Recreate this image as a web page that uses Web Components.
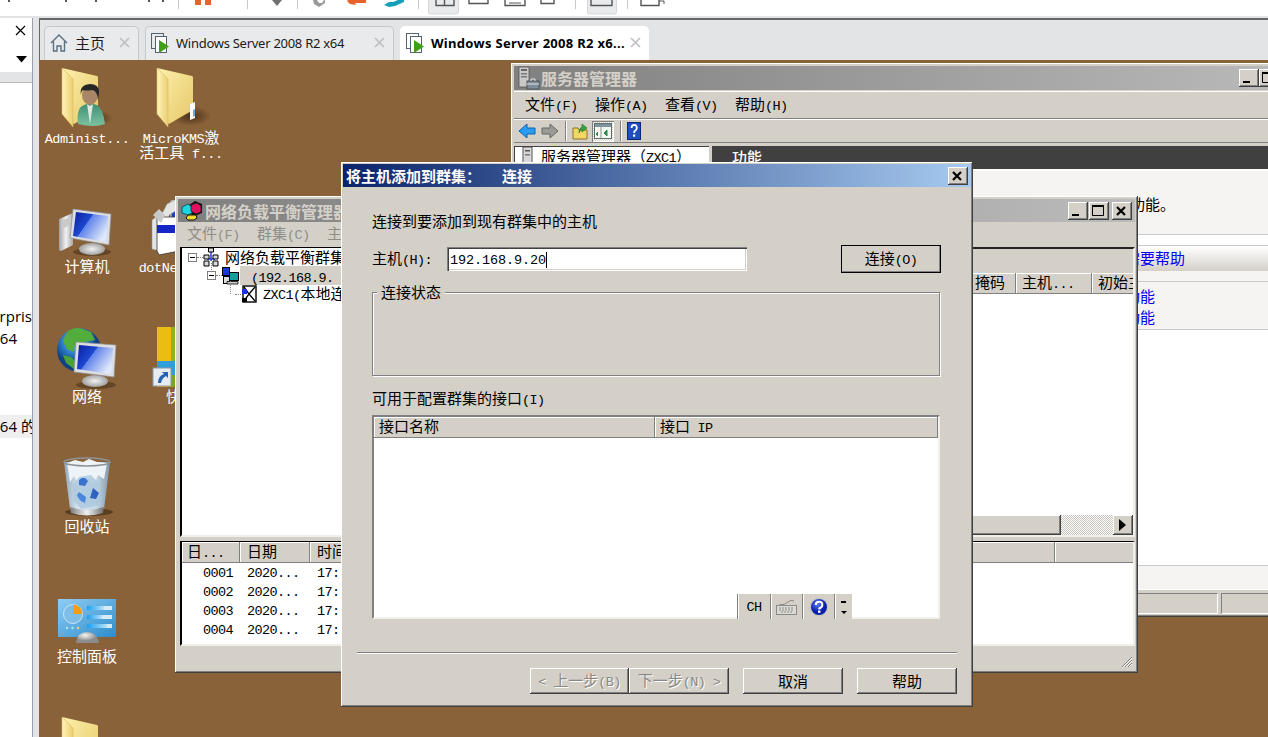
<!DOCTYPE html>
<html lang="zh">
<head>
<meta charset="utf-8">
<title>Windows Server 2008 R2 x64</title>
<style>
html,body{margin:0;padding:0;width:1268px;height:737px;overflow:hidden;background:#fff}
body{font:15px/16px "Noto Sans CJK SC","Liberation Sans",sans-serif;color:#000}
</style>
</head>
<body>
<x-app></x-app>
<script>
const BEVEL='box-shadow:inset -1px -1px #404040,inset 1px 1px #fff,inset -2px -2px #808080,inset 2px 2px #d4d0c8;';
const FOLD=`<linearGradient id="f" x1="0" y1="0" x2="1" y2="1"><stop offset="0" stop-color="#fdf0ac"/><stop offset="1" stop-color="#e6c868"/></linearGradient><linearGradient id="g" x1="0" y1="0" x2="1" y2="0"><stop offset="0" stop-color="#fff4b8"/><stop offset="1" stop-color="#eccf72"/></linearGradient><radialGradient id="s"><stop offset="0" stop-color="#3a2410" stop-opacity=".8"/><stop offset="1" stop-color="#3a2410" stop-opacity="0"/></radialGradient>`;
const SCR=`<linearGradient id="sc" x1="0" y1="0" x2="1" y2=".6"><stop offset="0" stop-color="#0a1ea0"/><stop offset=".45" stop-color="#1d49d0"/><stop offset=".46" stop-color="#5f83ea"/><stop offset="1" stop-color="#dfe7fb"/></linearGradient><radialGradient id="ba"><stop offset="0" stop-color="#f2f2f2"/><stop offset="1" stop-color="#a2a2a2"/></radialGradient>`;
const ART={
folder:`<defs>${FOLD}</defs><ellipse cx="40" cy="50" rx="20" ry="9" fill="url(#s)"/><path d="M7 2 42 10q1 0 1 2V44L19 58 7 46Z" fill="url(#f)"/><path d="M7 2 18 13V61L7 48Z" fill="url(#g)" stroke="#d9b95c" stroke-width=".6"/>`,
person:`<defs>${FOLD}<linearGradient id="b" x1="0" y1="0" x2="0" y2="1"><stop offset="0" stop-color="#3f8e74"/><stop offset="1" stop-color="#7cc2a0"/></linearGradient></defs><ellipse cx="40" cy="52" rx="18" ry="8" fill="url(#s)"/><path d="M7 2 42 10q1 0 1 2V44L19 58 7 46Z" fill="url(#f)"/><path d="M7 2 18 13V61L7 48Z" fill="url(#g)" stroke="#d9b95c" stroke-width=".6"/><path d="M23 58q-2-16 6-19l6-2 7 2q6 3 8 19-11 4-27 0Z" fill="url(#b)"/><path d="M32 38l3 20 3-20-3 2Z" fill="#dfe9e2"/><ellipse cx="35" cy="29" rx="8" ry="10" fill="#a98668"/><path d="M26 29q-2-10 9-11 9 0 9 8l-1 8q-1-10-6-10-6 1-9 0-2 1-2 5Z" fill="#262626"/>`,
paper:`<defs>${FOLD}</defs><ellipse cx="42" cy="50" rx="20" ry="10" fill="url(#s)"/><path d="M8 2 43 10q1 0 1 2V44L20 58 8 46Z" fill="url(#f)"/><path d="M8 2 19 13V61L8 48Z" fill="url(#g)" stroke="#d9b95c" stroke-width=".6"/><path d="M41 38l5-2v16l-5 2Z" fill="#fff"/><path d="M44 44l2-1v7l-2 1Z" fill="#6aa9e0"/>`,
computer:`<defs>${SCR}<linearGradient id="m" x1="0" y1="0" x2="1" y2="0"><stop offset="0" stop-color="#9ea2a6"/><stop offset=".5" stop-color="#f1f1f1"/><stop offset="1" stop-color="#a8a8a8"/></linearGradient></defs><path d="M4 24 18 18V50L6 56Q4 56 4 54Z" fill="url(#m)"/><path d="M6 26 16 22V30L6 34Z" fill="#c9c9c9"/><ellipse cx="37" cy="57" rx="19" ry="4" fill="#4d3317" opacity=".6"/><ellipse cx="37" cy="54" rx="13" ry="6" fill="url(#ba)"/><path d="M18 14 56 19 54 50 15 43Z" fill="#dcdde0" stroke="#8d9094" stroke-width=".7"/><path d="M21 17 53 21 51 47 18 41Z" fill="url(#sc)"/>`,
network:`<defs>${SCR}<radialGradient id="gl" cx=".4" cy=".3"><stop offset="0" stop-color="#7fc0ee"/><stop offset=".6" stop-color="#2a78c4"/><stop offset="1" stop-color="#103f82"/></radialGradient></defs><circle cx="24" cy="25" r="22" fill="url(#gl)"/><path d="M12 7q8-6 16-3l8 3 4 8-10 2-4 6-6-2-2 6-6-3-4-8Z" fill="#52ad3c"/><path d="M8 30l8 2 6 6 2 6-5 0-8-6Z" fill="#49a33a"/><ellipse cx="41" cy="60" rx="20" ry="4" fill="#4d3317" opacity=".6"/><ellipse cx="40" cy="56" rx="13" ry="6" fill="url(#ba)"/><path d="M21 17 61 20 59 52 19 47Z" fill="#dcdde0" stroke="#8d9094" stroke-width=".7"/><path d="M24 20 58 23 56 49 22 44Z" fill="url(#sc)"/>`,
recycle:`<defs><linearGradient id="bn" x1="0" y1="0" x2="1" y2="0"><stop offset="0" stop-color="#8fa6b8"/><stop offset=".3" stop-color="#d7e4ee"/><stop offset=".7" stop-color="#c6d8e6"/><stop offset="1" stop-color="#7f96a8"/></linearGradient><linearGradient id="ri" x1="0" y1="0" x2="1" y2="0"><stop offset="0" stop-color="#7c7c7c"/><stop offset=".5" stop-color="#f2f2f2"/><stop offset="1" stop-color="#6d6d6d"/></linearGradient></defs><ellipse cx="34" cy="57" rx="24" ry="4" fill="#3d2610" opacity=".6"/><path d="M9 7 55 7 49 54Q32 60 15 54Z" fill="url(#bn)"/><path d="M12 8l8-3 8 2 6-3 8 3 10 1-3 16-6-4-4 9-8-6-7 6-5-8-4 6Z" fill="#eef3f7"/><path d="M24 22l12-2 8 8-3 10 6 4-3 8-18 4-7-8-1-16Z" fill="#aac7de" opacity=".8"/><path d="M24 25q5-5 9 1l-3 5-6-1Z" fill="#3a73cd"/><path d="M38 33l6 5-3 6-6-1Z" fill="#2e63bf"/><path d="M24 37l7 5-1 6q-7-3-8-8Z" fill="#4a86dc"/><path d="M15 52Q32 58 49 52L48 58Q32 63 16 58Z" fill="url(#ri)"/><ellipse cx="32" cy="7" rx="23" ry="4" fill="none" stroke="#8d9499" stroke-width="1.6"/>`,
panel:`<defs><linearGradient id="p" x1="0" y1="0" x2="1" y2="1"><stop offset="0" stop-color="#90cdf2"/><stop offset="1" stop-color="#2d8ccc"/></linearGradient><radialGradient id="ba" cx=".4" cy=".3"><stop offset="0" stop-color="#f6f6f6"/><stop offset="1" stop-color="#8c8c8c"/></radialGradient><linearGradient id="bar" x1="0" y1="0" x2="1" y2="0"><stop offset="0" stop-color="#1aa0f0"/><stop offset="1" stop-color="#b7e2f8"/></linearGradient></defs><rect x="3" y="14" width="58" height="38" fill="url(#p)"/><circle cx="18" cy="29" r="9.5" fill="#7ebde6" stroke="#c6e6f8"/><path d="M18 19.500A9.500 9.500 0 0 1 27.500 29H18Z" fill="#ef9f1f"/><circle cx="12" cy="43" r="1.200" fill="#a6eaf0"/><circle cx="17.500" cy="43" r="1.200" fill="#a6eaf0"/><circle cx="23" cy="43" r="1.200" fill="#f4d083"/><rect x="32" y="21" width="25" height="4" fill="#d5ecf8"/><rect x="32" y="21" width="17" height="4" fill="url(#bar)"/><rect x="32" y="30" width="25" height="4" fill="#d5ecf8"/><rect x="32" y="30" width="15" height="4" fill="url(#bar)"/><rect x="32" y="39" width="25" height="4" fill="#d5ecf8"/><rect x="32" y="39" width="20" height="4" fill="url(#bar)"/><path d="M21 58Q22 47 32 47T44 58Z" fill="url(#ba)"/>`,
dotnet:`<path d="M22 6 38 4V36H22Z" fill="#1b3fc8" stroke="#ddd"/><path d="M3 25 14 17l4-8 8-4 4 9-10 6v38l-9-2L3 54Z" fill="#e4e4e4" stroke="#999" stroke-width=".5"/><path d="M8 22H30V56L10 60 8 56Z" fill="#fff" stroke="#333" stroke-width=".8"/><rect x="8" y="30" width="22" height="8" fill="#1426c8"/><path d="M4 20 12 28 16 20 10 14Z" fill="#c9c9c9"/>`,
kuai:`<rect x="8" y="2" width="14" height="38" fill="#e9bd12"/><rect x="22" y="2" width="13" height="38" fill="#89b51d"/><rect x="35" y="2" width="8" height="38" fill="#3b7fd6"/><rect x="8" y="36" width="32" height="18" fill="#2f9fd9"/><rect x="8" y="50" width="14" height="12" fill="#e0a517"/><rect x="22" y="50" width="18" height="12" fill="#78a61c"/><rect x="4" y="43" width="18" height="18" fill="#e5ecf2" stroke="#8f98a0"/><path d="M9 58q0-7 6-9l-2-2h6v6l-2-2q-4 2-5 7Z" fill="#2763b5"/>`
};
const ICON={
server:`<svg width="24" height="24" viewBox="0 0 24 24"><rect x="2" y="1" width="10" height="20" fill="#c9c9c9" stroke="#555" stroke-width=".8"/><rect x="4" y="3" width="6" height="2" fill="#666"/><rect x="4" y="7" width="6" height="1.500" fill="#777"/><rect x="4" y="10" width="6" height="1.500" fill="#777"/><rect x="10" y="15" width="12" height="8" fill="#7f8c99" stroke="#3b4752" stroke-width=".8"/><path d="M14 15v-2h4v2M10 18h12" fill="none" stroke="#e3e3e3"/></svg>`,
serverSm:`<svg width="20" height="18" viewBox="0 0 20 18"><rect x="3" y="0" width="9" height="17" fill="#d8d8d8" stroke="#555"/><rect x="5" y="3" width="5" height="1.500" fill="#555"/><rect x="5" y="7" width="5" height="1.500" fill="#777"/></svg>`,
back:`<svg width="18" height="16" viewBox="0 0 18 16"><path d="M1 8 9 1V5H17V11H9V15Z" fill="#2b9df0" stroke="#0b63b4"/></svg>`,
fwd:`<svg width="18" height="16" viewBox="0 0 18 16"><path d="M17 8 9 1V5H1V11H9V15Z" fill="#9a9a96" stroke="#666"/></svg>`,
up:`<svg width="16" height="18" viewBox="0 0 16 18"><path d="M1 6H6L7 8H15V17H1Z" fill="#f4d664" stroke="#8c7328"/><path d="M7 11q0-5 3-6V2l5 4-5 4V7q-2 1-3 4Z" fill="#38a83a" stroke="#1d6b20" stroke-width=".6"/></svg>`,
view:`<svg width="18" height="16" viewBox="0 0 18 16"><rect x=".5" y=".5" width="17" height="15" fill="#f4f6f0" stroke="#5f6f6a"/><rect x="1" y="1" width="16" height="3" fill="#7f93a0"/><path d="M7 4v11" stroke="#8a9a90"/><path d="M4 9l-2 2 2 2M13 7l-3 3 3 3Z" fill="#2a8a50" stroke="#2a8a50"/></svg>`,
help:`<svg width="14" height="18" viewBox="0 0 14 18"><rect x=".5" y=".5" width="13" height="17" fill="#1f4fbe" stroke="#0a2878"/><path d="M4.500 6q0-3 2.700-3t2.600 3q0 2-2.500 3.500V11" fill="none" stroke="#fff" stroke-width="1.800"/><rect x="6" y="12.500" width="2.200" height="2.200" fill="#fff"/></svg>`,
nlb:`<svg width="22" height="21" viewBox="0 0 22 21"><path d="M8 5 14 1l7 3v9l-7 3-6-3Z" fill="#111"/><path d="M1 7 7 4l4 3v6l-4 2-6-2Z" fill="#19d7e0" stroke="#073f44" stroke-width=".8"/><path d="M10 5l6-2 4 3v6l-5 2-5-3Z" fill="#e0105e" stroke="#222" stroke-width=".8"/><path d="M7 15h8l1 3-3 2H7l-2-2Z" fill="#f1de24" stroke="#111"/></svg>`,
cluster:`<svg width="16" height="20" viewBox="0 0 16 20"><path d="M8 5v9M4 12h8" stroke="#1f3fdc" stroke-width="1.500"/><path d="M5.500 1h5v4h-5ZM1 8h5v4H1ZM10 8h5v4h-5ZM1 14h5v5H1ZM10 14h5v5h-5Z" fill="#d8d8d8" stroke="#000"/></svg>`,
host:`<svg width="17" height="18" viewBox="0 0 17 18"><rect x=".5" y=".5" width="7" height="8" fill="#1a35d8" stroke="#000"/><rect x="1.500" y="9.500" width="6" height="7" fill="#ddd" stroke="#000"/><rect x="7.500" y="5.500" width="9" height="8" fill="#14a09a" stroke="#000"/><path d="M5 14.500h11v2.500H5Z" fill="#ccc" stroke="#000" stroke-width=".8"/></svg>`,
node:`<svg width="16" height="18" viewBox="0 0 16 18"><rect x="2" y="1" width="13" height="16" fill="#fff" stroke="#000" stroke-width="1.400"/><path d="M3 2 8 9 3 16M14 2 8 9l6 7" fill="none" stroke="#000" stroke-width="1.300"/><rect x="1" y="4" width="5" height="5" fill="#1a35d8"/><rect x="1" y="13" width="5" height="4" fill="#000"/></svg>`,
q:`<svg width="20" height="20" viewBox="0 0 20 20"><defs><radialGradient id="q" cx=".4" cy=".3"><stop offset="0" stop-color="#5a7df4"/><stop offset="1" stop-color="#0b1ea8"/></radialGradient></defs><circle cx="10" cy="10" r="9.500" fill="#c9c6c0"/><circle cx="10" cy="10" r="8" fill="url(#q)"/><path d="M6.800 8q0-3.300 3.300-3.300T13.300 8q0 2-3 3.500V12.500" fill="none" stroke="#fff" stroke-width="2"/><rect x="9" y="13.500" width="2.500" height="2.300" fill="#fff"/></svg>`,
kb:`<svg width="21" height="16" viewBox="0 0 21 16"><path d="M3 6Q9 6 12 3t6-1" fill="none" stroke="#8a8a86"/><rect x=".5" y="6.500" width="20" height="9" fill="#dcdad4" stroke="#8a8a86"/><path d="M3 9h15M3 11h15M5 13h11" stroke="#8a8a86" stroke-dasharray="2 1"/></svg>`
};
const svgArt=n=>`<svg width="64" height="64" viewBox="0 0 64 64">${ART[n]}</svg>`;
/* mixed CJK / half-width text, as in the bitmap system font */
customElements.define('z-t',class extends HTMLElement{
  connectedCallback(){
    if(this.shadowRoot)return;
    const s=this.textContent;this.textContent='';
    const r=this.attachShadow({mode:'open'});
    const esc=x=>x.replace(/&/g,'&amp;').replace(/</g,'&lt;');
    r.innerHTML=`<style>:host{display:inline;white-space:pre}.l{font-family:"Liberation Mono",monospace;font-size:13.5px;letter-spacing:var(--ls,-.6px)}</style>`+
      s.split(/([\x20-\x7e]+)/).filter(Boolean).map(p=>/^[\x20-\x7e]/.test(p)?`<span class="l">${esc(p)}</span>`:esc(p)).join('');
  }
});
customElements.define('x-button',class extends HTMLElement{
  constructor(){super();this.attachShadow({mode:'open'}).innerHTML=`<style>
  :host{display:flex;align-items:center;justify-content:center;box-sizing:border-box;width:100px;height:26px;background:#d4d0c8;${BEVEL}}
  :host([disabled]){color:#8a8884;text-shadow:1px 1px 0 #fff}
  :host([default]){outline:1px solid #000;outline-offset:-1px;height:28px}
  </style><slot></slot>`}
});
customElements.define('x-caption-btn',class extends HTMLElement{
  constructor(){super();const k=this.getAttribute('kind');
  const g={min:'<path d="M4 13h7" stroke="#000" stroke-width="2"/>',max:'<path d="M3.500 4.500h11v9h-11Z" fill="none" stroke="#000"/><path d="M3 4h12" stroke="#000" stroke-width="2"/>',close:'<path d="M5 5l8 8M13 5l-8 8" stroke="#000" stroke-width="2.200"/>'}[k];
  this.attachShadow({mode:'open'}).innerHTML=`<style>:host{display:block;width:20px;height:18px;background:#d4d0c8;box-shadow:inset -1px -1px #404040,inset 1px 1px #fff,inset -2px -2px #808080}svg{display:block}</style><svg width="20" height="18" viewBox="0 0 20 18">${g}</svg>`}
});
customElements.define('x-window',class extends HTMLElement{
  constructor(){super();this.attachShadow({mode:'open'}).innerHTML=`<style>
  :host{position:absolute;display:flex;flex-direction:column;box-sizing:border-box;padding:var(--pad,3px);background:#d4d0c8;box-shadow:inset -1px -1px #404040,inset 1px 1px #fff,inset -2px -2px #808080,inset 2px 2px #d4d0c8}
  .t{flex:none;display:flex;align-items:center;height:var(--th,23px);padding:0 3px;gap:var(--gap,2px);font-weight:700;font-size:var(--ts,16px);color:#d4d0c8;background:linear-gradient(90deg,#808080,#bbb);white-space:pre;overflow:hidden}
  :host([active]) .t{color:#fff;background:linear-gradient(90deg,#0a246a,#a6caf0)}
  .b{margin-left:auto;display:flex}
  ::slotted([slot=controls]){display:flex}
  </style><div class="t"><slot name="icon"></slot><span id="c"></span><div class="b"><slot name="controls"></slot></div></div><slot></slot>`}
  connectedCallback(){
    const [x,y,w,h]=this.getAttribute('box').split(',');
    Object.assign(this.style,{left:x+'px',top:y+'px',width:w+'px',height:h+'px'});
    this.shadowRoot.getElementById('c').textContent=this.getAttribute('caption');
  }
});
customElements.define('x-toolbar',class extends HTMLElement{
  constructor(){super();this.attachShadow({mode:'open'}).innerHTML=`<style>:host{display:block;height:16px;background:#fff;border-bottom:2px solid #e3e4e6;overflow:hidden}svg{display:block}</style>
  <svg width="1268" height="16" viewBox="0 0 1268 16">
  <g fill="#555"><rect x="8" y="0" width="2" height="2"/><rect x="65" y="0" width="2" height="2"/><rect x="95" y="0" width="2" height="2"/><rect x="148" y="0" width="2" height="2"/><rect x="162" y="0" width="2" height="2"/></g>
  <g stroke="#c8c8c8"><path d="M178.500 0V9M247.500 0V9M297.500 0V9M418.500 0V9M575.500 0V9M627.500 0V9"/></g>
  <rect x="195" y="0" width="6" height="5" fill="#e8622a"/><rect x="205" y="0" width="6" height="5" fill="#e8622a"/>
  <path d="M272 0H282L277 6Z" fill="#707070"/>
  <path d="M313 0h4l2 3h3l2-3h1v3l-6 4-5-3Z" fill="#999"/>
  <path d="M348 0h18v3h-11l1 2-6-1-3-3Z" fill="#e8622a"/>
  <path d="M384 5l5-3h4l5-2h6v2l-9 4-6 1Z" fill="#14a0b8"/>
  <rect x="428.500" y="-4" width="30" height="18" rx="2" fill="#e9eaec" stroke="#d6d7da"/>
  <path d="M436 0v5.500h18V0M444.500 0v5" fill="none" stroke="#555" stroke-width="1.400"/>
  <path d="M469 0v3.500h19V0" fill="none" stroke="#555" stroke-width="1.400"/>
  <path d="M505 0v5.500h20V0" fill="none" stroke="#555" stroke-width="1.400"/><path d="M509 3h12" stroke="#555"/>
  <path d="M541 0v3.500h13V0" fill="none" stroke="#555" stroke-width="1.400"/>
  <rect x="587.500" y="-4" width="29" height="18" rx="2" fill="#e9eaec" stroke="#d6d7da"/>
  <path d="M591 0v5.500h21V0" fill="none" stroke="#555" stroke-width="1.400"/>
  <path d="M641 0v5.500h18V0" fill="none" stroke="#555" stroke-width="1.400"/><path d="M659 1h5v3" fill="none" stroke="#555"/>
  </svg>`}
});
customElements.define('x-sidebar',class extends HTMLElement{
  constructor(){super();this.attachShadow({mode:'open'}).innerHTML=`<style>
  :host{flex:none;display:flex;flex-direction:column;width:33px;box-sizing:border-box;border-right:1px solid #9a9ea6;background:#e3e4e6;overflow:hidden;white-space:nowrap;font:15px/22px "Open Sans","Noto Sans CJK SC",sans-serif}
  .h{height:29px;background:#fff;position:relative}
  .h svg{position:absolute;left:15px;top:7px}
  .d{height:25px;background:#fff;box-sizing:border-box;position:relative}
  .d svg{position:absolute;left:16px;top:9px}
  .gap{height:10px}
  .list{flex:1;background:#fff;border-top:1px solid #bbb;padding-top:222px}
  .r{direction:rtl;height:22px;line-height:22px;text-align:right}
  .s{margin-left:-8px}
  .x{margin-top:66px;background:#efefef;height:23px;width:48px}
  </style>
  <div class="h"><svg width="12" height="12" viewBox="0 0 12 12"><path d="M1 1l9 9M10 1l-9 9" stroke="#000" stroke-width="1.200"/></svg></div>
  <div class="d"><svg width="12" height="7" viewBox="0 0 12 7"><path d="M0 0H11L5.500 6.500Z"/></svg></div>
  <div class="gap"></div>
  <div class="list"><div class="r">Enterpris</div><div class="s">x64</div><div class="s x">x64 的</div></div>`}
});
customElements.define('x-tab',class extends HTMLElement{
  constructor(){super();const home=this.hasAttribute('home');this.attachShadow({mode:'open'}).innerHTML=`<style>
  :host{display:flex;align-items:center;box-sizing:border-box;height:34px;border:1px solid #c6c8cc;border-bottom:0;border-radius:5px 5px 0 0;background:#e9eaec;padding:0 8px 2px 5px;gap:5px;white-space:nowrap;overflow:hidden;font:13px/16px "Noto Sans","Noto Sans CJK SC",sans-serif;letter-spacing:-.27px;color:#1a1a1a}
  :host([active]){background:#fff;border-color:#fff;font-weight:700;color:#000;letter-spacing:.3px}
  .l{flex:1}
  .x{margin-left:auto}
  svg{flex:none;display:block}
  :host([home]){font-size:15px;letter-spacing:0;gap:7px}
  </style>${home?`<svg width="18" height="20" viewBox="0 0 18 20"><path d="M1 10 9 2l8 8M3.500 8.500V18H7v-5h4v5h3.500V8.500" fill="none" stroke="#5a6f80" stroke-width="1.400"/></svg>`:`<svg width="20" height="22" viewBox="0 0 20 22"><rect x=".5" y="1.500" width="12" height="15" fill="none" stroke="#55636f"/><rect x="4.500" y="4.500" width="11" height="16" fill="#fff" stroke="#55636f"/><path d="M8 8l10 6.500L8 21Z" fill="#3fa016"/></svg>`}<span class="l"><slot></slot></span><svg class="x" width="11" height="11" viewBox="0 0 11 11"><path d="M1 1l9 9M10 1l-9 9" stroke="#bcbec2" stroke-width="1.600"/></svg>`}
});
customElements.define('x-tabs',class extends HTMLElement{
  constructor(){super();this.attachShadow({mode:'open'}).innerHTML=`<style>
  :host{flex:none;display:flex;align-items:flex-end;gap:6px;height:42px;box-sizing:border-box;border-top:2px solid #666;border-left:1px solid #666;background:#e3e4e6;padding-left:4px}
  ::slotted(:nth-child(1)){width:95px}::slotted(:nth-child(2)),::slotted(:nth-child(3)){width:249px}
  </style><slot></slot>`}
});
customElements.define('x-desktop-icon',class extends HTMLElement{
  constructor(){super();this.attachShadow({mode:'open'}).innerHTML=`<style>
  :host{position:absolute;display:flex;flex-direction:column;align-items:center;width:100px;color:#fff;--ls:-.4px;text-align:center;line-height:15px}
  svg{display:block;flex:none}
  ::slotted(z-t){display:block;height:15px}
  </style><span id="a"></span><div><slot></slot></div>`}
  connectedCallback(){
    const [x,y]=this.getAttribute('at').split(',');
    Object.assign(this.style,{left:x+'px',top:y+'px'});
    const a=this.shadowRoot.getElementById('a');a.innerHTML=svgArt(this.getAttribute('art'));a.style.cssText='display:block;height:65px;margin-bottom:-2px';
  }
});
customElements.define('x-headers',class extends HTMLElement{
  constructor(){super();this.attachShadow({mode:'open'}).innerHTML=`<style>
  :host{display:flex;flex:none;height:21px;background:#d4d0c8;overflow:hidden;white-space:nowrap}
  ::slotted(*){box-sizing:border-box;flex:none;height:21px;padding:0 0 0 var(--hp,7px);line-height:18px;border-right:1px solid #808080;border-bottom:1px solid #808080;box-shadow:inset 1px 1px #fff;overflow:hidden}
  </style><slot></slot>`}
});
customElements.define('x-cell',class extends HTMLElement{
  constructor(){super();this.attachShadow({mode:'open'}).innerHTML=`<style>:host{display:block}</style><slot></slot>`}
  connectedCallback(){const w=this.getAttribute('w');if(w)this.style.width=w+'px'}
});
customElements.define('x-sunken',class extends HTMLElement{
  constructor(){super();this.attachShadow({mode:'open'}).innerHTML=`<style>:host{display:flex;flex-direction:column;box-sizing:border-box;background:#fff;border-left:2px solid #404040;border-top:2px solid #404040;border-right:2px solid #f1efe9;border-bottom:2px solid #f1efe9;overflow:hidden}</style><slot></slot>`}
});
customElements.define('x-tree-row',class extends HTMLElement{
  constructor(){super();this.attachShadow({mode:'open'}).innerHTML=`<style>
  :host{display:flex;align-items:center;height:18.5px;white-space:nowrap;position:relative}
  .e{flex:none;width:9px;height:9px;border:1px solid #808080;background:#fff;box-sizing:border-box;position:relative;margin-right:5px}
  .e::after{content:"";position:absolute;left:1px;right:1px;top:3px;height:1px;background:#000}
  .e::before{content:"";position:absolute;left:8px;top:3px;width:6px;border-top:1px dotted #808080}
  :host([leaf]) .e{border-color:transparent;background:none}
  :host([leaf]) .e::after{display:none}
  :host(:not([root]))::before{content:"";position:absolute;left:calc(var(--ind) + 4px);top:-4px;height:11px;border-left:1px dotted #808080}
  :host([leaf])::before{height:13px}
  .i{flex:none;display:flex;width:18px;margin:0 4px 0 1px}
  svg{display:block}
  </style><span class="e"></span><span class="i" id="i"></span><slot></slot>`}
  connectedCallback(){const n=this.getAttribute('ind')||0;this.style.paddingLeft=n+'px';this.style.setProperty('--ind',n+'px');this.shadowRoot.getElementById('i').innerHTML=ICON[this.getAttribute('icon')]}
});
customElements.define('x-server-manager',class extends HTMLElement{
  constructor(){super();this.attachShadow({mode:'open'}).innerHTML=`<style>
  :host{display:flex;flex-direction:column;flex:1;min-height:0}
  .m{flex:none;height:28px;display:flex;gap:18px;align-items:center;padding-left:11px;margin-top:1px;border-top:1px solid #fff;border-bottom:1px solid #808080;box-sizing:border-box;width:100%}
  .m>*{display:block;width:52px}
  .tb{flex:none;height:24px;display:flex;align-items:center;gap:5px;padding-left:4px;border-top:1px solid #fff;border-bottom:1px solid #808080;box-sizing:border-box}
  .tb svg{display:block}
  .sep{width:1px;height:20px;background:#808080;box-shadow:1px 0 #fff;margin:0 1px}
  .pr{box-sizing:border-box;width:22px;height:21px;margin-left:-1px;display:flex;align-items:center;justify-content:center;background:repeating-conic-gradient(#fff 0 25%,#d4d0c8 0 50%) 0 0/2px 2px;box-shadow:inset 1px 1px #808080,inset -1px -1px #fff}
  .body{flex:1;min-height:0;display:flex;gap:3px;margin-top:3px}
  .l{flex:none;width:195px;background:#fff;box-sizing:border-box;padding-left:5px;display:flex;gap:1px;align-items:flex-start;white-space:nowrap;border-left:1px solid #404040;border-top:1px solid #404040}
  .l svg{display:block}
  .r{flex:1;display:flex;flex-direction:column;min-width:0}
  .hd{flex:none;height:23px;background:#404040;color:#fff;padding-left:20px;line-height:21px;font-weight:500;box-sizing:border-box}
  .c{flex:1;display:flex;flex-direction:column;background:#f5f4f2;border-top:2px solid #fff;box-sizing:border-box;min-height:0;white-space:nowrap}
  .a{height:64px;flex:none;box-sizing:border-box;padding:25px 0 0 298px;border-bottom:1px solid #c9c9c9}
  .gapw{height:11px;flex:none;box-sizing:border-box;background:#fff;border-bottom:1px solid #c9c9c9}
  .h{height:25px;flex:none;background:linear-gradient(#fff,#d4d0c8);color:#00e;line-height:24px;padding-left:413px}
  .lk{height:49px;flex:none;color:#00e;padding:3px 0 0 383px;margin-top:10px;border-top:1px solid #c9c9c9;border-bottom:1px solid #c9c9c9;box-sizing:border-box;line-height:21px}
  .w{flex:1;background:#fff;border-bottom:1px solid #c9c9c9}
  .st{height:23px;flex:none}
  .e{height:1px;flex:none;background:#fff}
  .s{flex:none;height:24px;display:flex;gap:3px;box-sizing:border-box;padding-top:3px}
  .s i{display:block;flex:none;height:21px;box-sizing:border-box;border-top:1px solid #808080;border-left:1px solid #808080;border-right:1px solid #fff;border-bottom:1px solid #fff}
  </style>
  <div class="m"><z-t>文件(F)</z-t><z-t>操作(A)</z-t><z-t>查看(V)</z-t><z-t>帮助(H)</z-t></div>
  <div class="tb">${ICON.back}${ICON.fwd}<span class="sep"></span>${ICON.up}<span class="pr">${ICON.view}</span><span class="sep"></span>${ICON.help}</div>
  <div class="body">
    <div class="l">${ICON.serverSm}<div style="line-height:16px;margin-top:1px"><z-t>服务器管理器（ZXC1）</z-t></div></div>
    <div class="r"><div class="hd">功能</div>
      <div class="c">
        <div class="a">此处显示已安装的功能。</div>
        <div class="gapw"></div>
        <div class="h">需要帮助</div>
        <div class="lk">添加功能<br>删除功能</div>
        <div class="w"></div>
        <div class="st"></div>
        <div class="e"></div>
      </div>
    </div>
  </div>
  <div class="s"><i style="width:704px"></i><i style="width:74px"></i></div>`}
});
customElements.define('x-nlb-manager',class extends HTMLElement{
  constructor(){super();this.attachShadow({mode:'open'}).innerHTML=`<style>
  :host{display:flex;flex-direction:column;flex:1;min-height:0;padding:0 0 0 2px}
  .m{flex:none;height:25px;display:flex;align-items:center;gap:18px;padding-left:7px;color:#8f8d88;white-space:nowrap}
  .m z-t{display:block;width:52px}
  .top{flex:none;height:290px;display:flex;gap:4px}
  .tree{width:165px;padding:0 0 0 6px;border-top-width:1px;flex:none;border-left-color:#000;border-top-color:#000}
  .sel{display:block;background:#d4d0c8;width:120px;height:19px;line-height:19px;padding-left:11px;margin-left:-4px}
  .list{flex:1;background:#fff;display:flex;flex-direction:column;border-top:2px solid #222;border-right:2px solid #f1efe9;border-bottom:2px solid #f1efe9;box-sizing:border-box;min-width:0;--hp:6px}
  .bar{flex:none;height:24px;background:#d4d0c8}
  .w{flex:1}
  .sb{flex:none;height:20px;display:flex;background:repeating-conic-gradient(#fff 0 25%,#c8c4bc 0 50%) 0 0/2px 2px}
  .th{width:712px;${BEVEL}background:#d4d0c8}
  .sp{flex:1}
  .ar{width:20px;${BEVEL}background:#d4d0c8;display:flex;align-items:center;justify-content:center}
  .bot{flex:none;height:105px;margin-top:4px;border-top-width:1px;border-left-color:#000;border-top-color:#000}
  .row{display:flex;height:19px;line-height:19px;white-space:nowrap}
  .row:first-of-type{margin-top:-2px}
  .row>*{display:block;flex:none;box-sizing:border-box}
  .a{width:58px;padding-left:21px}.b{width:70px;padding-left:7px}.c{padding-left:7px}
  .grip{flex:1;display:flex;justify-content:flex-end;align-items:flex-end;padding:0 2px 2px 0}
  .grip svg{display:block}
  </style>
  <div class="m"><z-t>文件(F)</z-t><z-t>群集(C)</z-t><z-t>主机(O)</z-t></div>
  <div class="top">
    <x-sunken class="tree">
      <x-tree-row root icon="cluster"><z-t>网络负载平衡群集</z-t></x-tree-row>
      <x-tree-row icon="host" ind="19"><span class="sel"><z-t>(192.168.9.</z-t></span></x-tree-row>
      <x-tree-row icon="node" ind="38" leaf><z-t>ZXC1(本地连</z-t></x-tree-row>
    </x-sunken>
    <div class="list">
      <div class="bar"></div>
      <x-headers><x-cell w="620"></x-cell><x-cell w="47"><z-t>掩码</z-t></x-cell><x-cell w="76"><z-t>主机...</z-t></x-cell><x-cell w="60"><z-t>初始主机</z-t></x-cell></x-headers>
      <div class="w"></div>
      <div class="sb"><div class="th"></div><div class="sp"></div><div class="ar"><svg width="8" height="12" viewBox="0 0 8 12"><path d="M0 0 7 6 0 12Z"/></svg></div></div>
    </div>
  </div>
  <x-sunken class="bot" style="margin-right:0">
    <x-headers><x-cell w="58" style="padding-left:5px"><z-t>日...</z-t></x-cell><x-cell w="70"><z-t>日期</z-t></x-cell><x-cell w="745"><z-t>时间</z-t></x-cell><x-cell w="80"></x-cell></x-headers>
    <div class="row"><z-t class="a">0001</z-t><z-t class="b">2020...</z-t><z-t class="c">17:</z-t></div>
    <div class="row"><z-t class="a">0002</z-t><z-t class="b">2020...</z-t><z-t class="c">17:</z-t></div>
    <div class="row"><z-t class="a">0003</z-t><z-t class="b">2020...</z-t><z-t class="c">17:</z-t></div>
    <div class="row"><z-t class="a">0004</z-t><z-t class="b">2020...</z-t><z-t class="c">17:</z-t></div>
  </x-sunken>
  <div class="grip"><svg width="12" height="12" viewBox="0 0 12 12"><path d="M11 1 1 11M11 4 4 11M11 7 7 11" stroke="#808080"/><path d="M11 2 2 11M11 5 5 11M11 8 8 11" stroke="#fff"/></svg></div>`}
});
customElements.define('x-add-host-dialog',class extends HTMLElement{
  constructor(){super();this.attachShadow({mode:'open'}).innerHTML=`<style>
  :host{display:flex;flex-direction:column;flex:1;min-height:0;padding:0 14px}
  .in{padding:26px 16px 0 15px}
  .row{display:flex;align-items:center;margin-top:16px;height:28px}
  .lbl{width:75px;flex:none}
  .inp{box-sizing:border-box;width:300px;height:24px;background:#fff;padding:1px 0 0 3px;line-height:20px;white-space:nowrap;--ls:-.1px;box-shadow:inset 1px 1px #808080,inset 2px 2px #404040,inset -1px -1px #fff,inset -2px -2px #d4d0c8;display:flex;align-items:center}
  .caret{display:inline-block;width:1px;height:16px;background:#000}
  .row x-button{margin-left:auto}
  .grp{margin:19px 1px 0 0;height:84px;box-sizing:border-box;border:1px solid #808080;box-shadow:1px 1px #fff,inset 1px 1px #fff}
  .grp span{display:block;width:fit-content;margin:-9px 0 0 4px;padding:0 4px;background:#d4d0c8;line-height:16px}
  .l2{margin-top:14px;height:16px}
  .lst{margin:9px 1px 0 0;height:204px;border-color:#808080 #f1efe9 #f1efe9 #808080;--hp:5px}
  hr{margin:33px 0 0;border:0;height:2px;background:linear-gradient(#808080 50%,#fff 50%)}
  .bt{display:flex;justify-content:flex-end;margin-top:14px}
  .bt .g{margin-left:14px}
  </style>
  <div class="in">
    <div>连接到要添加到现有群集中的主机</div>
    <div class="row"><span class="lbl"><z-t>主机(H):</z-t></span><div class="inp"><z-t>192.168.9.20</z-t><i class="caret"></i></div><x-button default><z-t>连接(O)</z-t></x-button></div>
    <div class="grp"><span>连接状态</span></div>
    <div class="l2"><z-t>可用于配置群集的接口(I)</z-t></div>
    <x-sunken class="lst"><x-headers><x-cell w="281"><z-t>接口名称</z-t></x-cell><x-cell w="283"><z-t>接口 IP</z-t></x-cell></x-headers></x-sunken>
  </div>
  <hr>
  <div class="bt">
    <x-button disabled style="width:99px"><z-t>&lt; 上一步(B)</z-t></x-button>
    <x-button disabled><z-t>下一步(N) &gt;</z-t></x-button>
    <x-button class="g">取消</x-button>
    <x-button class="g">帮助</x-button>
  </div>`}
});
customElements.define('x-langbar',class extends HTMLElement{
  constructor(){super();this.attachShadow({mode:'open'}).innerHTML=`<style>
  :host{position:absolute;display:flex;align-items:center;height:25px;background:#d4d0c8}
  .c{box-sizing:border-box;height:25px;display:flex;align-items:center;justify-content:center;border-left:1px solid #808080;box-shadow:inset 1px 0 #fff}
  svg{display:block}
  .d{display:block;position:relative;width:8px;height:16px}
  .d::before{content:"";position:absolute;left:1px;top:2px;width:5px;height:2px;background:#000}
  .d::after{content:"";position:absolute;left:1px;top:12px;border:3px solid transparent;border-top-color:#000;border-bottom:0}
  </style>
  <div class="c" style="width:33px"><z-t>CH</z-t></div>
  <div class="c" style="width:32px">${ICON.kb}</div>
  <div class="c" style="width:32px">${ICON.q}</div>
  <div class="c" style="width:18px"><span class="d"></span></div>`}
  connectedCallback(){const [x,y]=this.getAttribute('at').split(',');Object.assign(this.style,{left:x+'px',top:y+'px'})}
});
customElements.define('x-desktop',class extends HTMLElement{
  constructor(){super();this.attachShadow({mode:'open'}).innerHTML=`<style>:host{display:block;flex:1;position:relative;background:#8a6239;overflow:hidden}</style><slot></slot>`}
});
customElements.define('x-app',class extends HTMLElement{
  constructor(){super();this.attachShadow({mode:'open'}).innerHTML=`<style>
  :host{display:flex;flex-direction:column;width:1268px;height:737px;overflow:hidden}
  .row{flex:1;display:flex;min-height:0;background:#e3e4e6}
  .main{flex:1;margin-left:6px;display:flex;flex-direction:column;min-width:0}
  </style>
  <x-toolbar></x-toolbar>
  <div class="row">
    <x-sidebar></x-sidebar>
    <div class="main">
      <x-tabs>
        <x-tab home>主页</x-tab>
        <x-tab>Windows Server 2008 R2 x64</x-tab>
        <x-tab active>Windows Server 2008 R2 x6...</x-tab>
      </x-tabs>
      <x-desktop>
        <x-desktop-icon at="-2,6" art="person"><z-t>Administ...</z-t></x-desktop-icon>
        <x-desktop-icon at="92,6" art="paper"><z-t>MicroKMS激</z-t><z-t>活工具 f...</z-t></x-desktop-icon>
        <x-desktop-icon at="-2,135" art="computer">计算机</x-desktop-icon>
        <x-desktop-icon at="92,135" art="dotnet"><z-t>dotNetFx...</z-t></x-desktop-icon>
        <x-desktop-icon at="-2,265" art="network">网络</x-desktop-icon>
        <x-desktop-icon at="92,265" art="kuai">快压</x-desktop-icon>
        <x-desktop-icon at="-2,395" art="recycle">回收站</x-desktop-icon>
        <x-desktop-icon at="-2,525" art="panel">控制面板</x-desktop-icon>
        <x-desktop-icon at="-2,655" art="folder"></x-desktop-icon>

        <x-window box="472,3,794,554" caption="服务器管理器" style="--th:24px;--gap:0">
          <span slot="icon" style="display:block;height:24px">${ICON.server}</span>
          <span slot="controls"><x-caption-btn kind="min"></x-caption-btn><x-caption-btn kind="max"></x-caption-btn><x-caption-btn kind="close"></x-caption-btn></span>
          <x-server-manager></x-server-manager>
        </x-window>

        <x-window box="136,136,963,477" caption="网络负载平衡管理器">
          <span slot="icon" style="display:block;height:21px">${ICON.nlb}</span>
          <span slot="controls" style="gap:1px"><x-caption-btn kind="min"></x-caption-btn><x-caption-btn kind="max"></x-caption-btn><x-caption-btn kind="close" style="margin-left:2px"></x-caption-btn></span>
          <x-nlb-manager></x-nlb-manager>
        </x-window>

        <x-window box="302,102,632,545" caption="将主机添加到群集：　    连接" active style="--pad:2px;--ts:15px">
          <span slot="controls"><x-caption-btn kind="close"></x-caption-btn></span>
          <x-add-host-dialog></x-add-host-dialog>
        </x-window>

        <x-langbar at="698,534"></x-langbar>
      </x-desktop>
    </div>
  </div>`}
});
</script>
</body>
</html>
